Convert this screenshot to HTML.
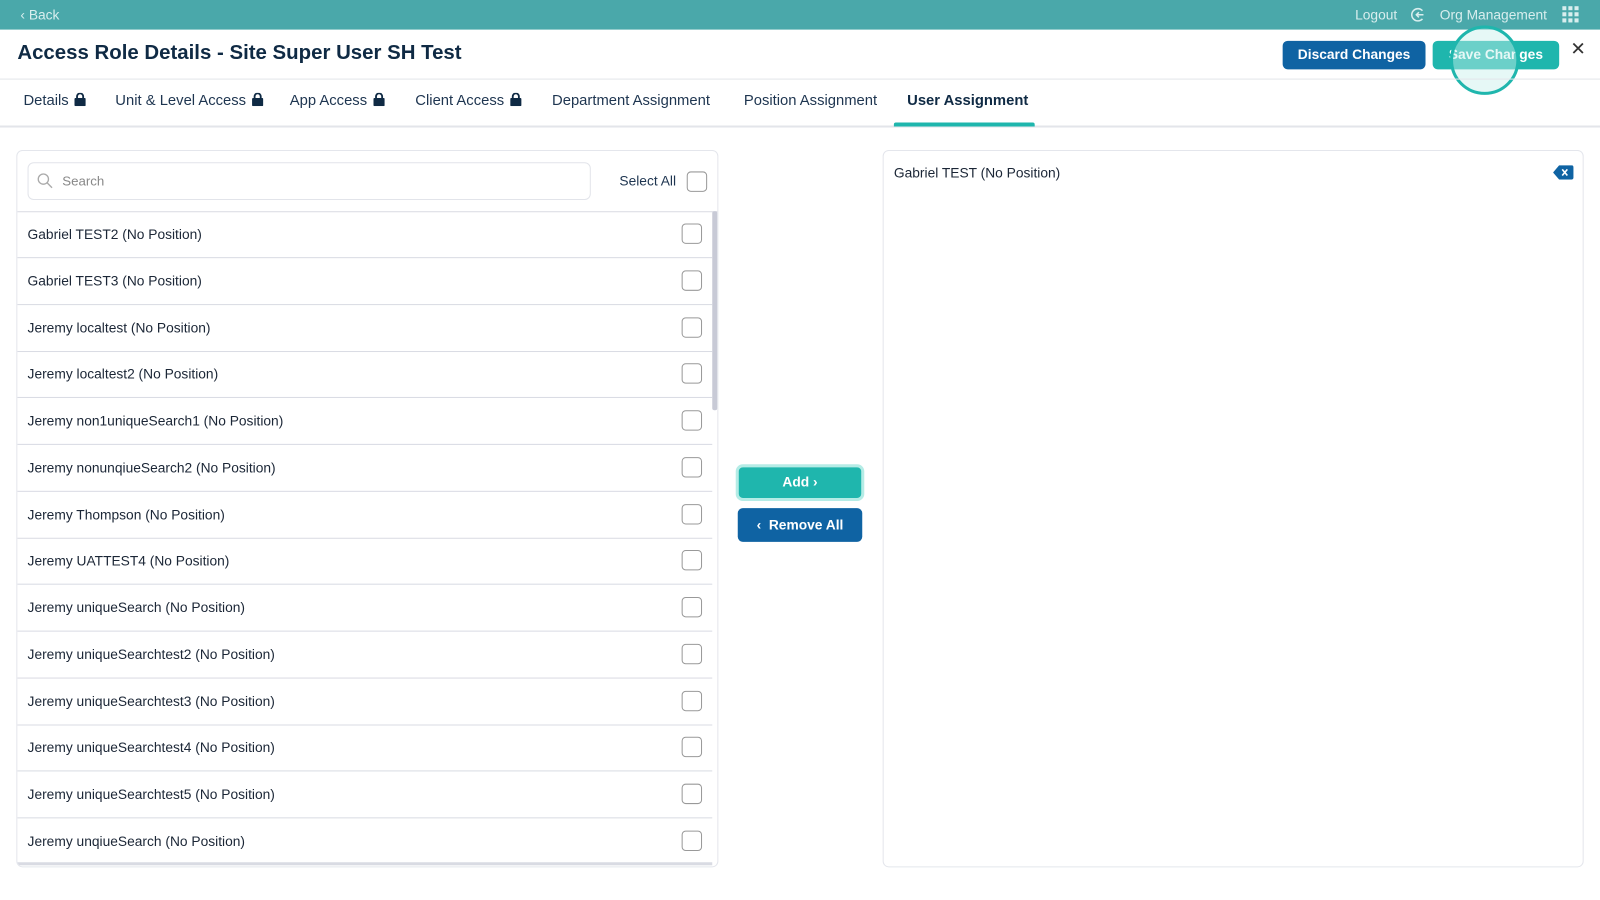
<!DOCTYPE html>
<html><head><style>
*{box-sizing:border-box;margin:0;padding:0}
body{width:1600px;height:900px;background:#fff;font-family:"Liberation Sans",sans-serif;color:#1b2636;position:relative;overflow:hidden}
#w{position:absolute;left:0;top:0;width:1568px;height:882px;transform:scale(1.020408);transform-origin:0 0}
.top{position:absolute;left:0;top:0;width:1568px;height:29px;background:#4aa8aa;color:#d8eeee;font-size:13.5px}
.abs{position:absolute}
.title{left:17px;top:41px;font-size:20px;font-weight:bold;color:#0f2a44}
.btn{position:absolute;border-radius:5px;color:#fff;font-weight:bold;font-size:13.5px;text-align:center}
.tabs{position:absolute;left:0;top:77px;width:1568px;height:48px;border-top:1px solid #e3e5ea;border-bottom:2px solid #e3e5ea}
.tab{position:absolute;top:13px;font-size:14.5px;color:#1e3550}
.lock{display:inline-block;vertical-align:-1px;margin-left:6px}
.panel{position:absolute;border:1px solid #e4e6ec;border-radius:6px;background:#fff}
.row{position:absolute;left:0;width:681px;height:46px;border-bottom:1px solid #d9dbe3;font-size:13.5px;padding:15px 0 0 10px}
.cb{position:absolute;right:10px;top:12px;width:20px;height:20px;border:1px solid #999;border-radius:4px}
</style></head><body><div id="w">
<div class="top">
<div class="abs" style="left:20px;top:7px">‹ Back</div>
<div class="abs" style="left:1328px;top:7px">Logout</div>
<svg class="abs" style="left:1382px;top:7px" width="15" height="15" viewBox="0 0 15 15"><path d="M12 3.5A6 6 0 1 0 12 11.5" fill="none" stroke="#d8eeee" stroke-width="1.5"/><path d="M13 7.5H6M8.5 5L6 7.5L8.5 10" fill="none" stroke="#d8eeee" stroke-width="1.5"/></svg>
<div class="abs" style="left:1411px;top:7px">Org Management</div>
<svg class="abs" style="left:1531px;top:6px" width="17" height="17"><g fill="#d8eeee"><rect x="0" y="0" width="4" height="4"/><rect x="6" y="0" width="4" height="4"/><rect x="12" y="0" width="4" height="4"/><rect x="0" y="6" width="4" height="4"/><rect x="6" y="6" width="4" height="4"/><rect x="12" y="6" width="4" height="4"/><rect x="0" y="12" width="4" height="4"/><rect x="6" y="12" width="4" height="4"/><rect x="12" y="12" width="4" height="4"/></g></svg>
</div>
<div class="abs title">Access Role Details - Site Super User SH Test</div>
<div class="btn" style="left:1257px;top:40px;width:140px;height:28px;line-height:28px;background:#0f63a3">Discard Changes</div>
<div class="btn" style="left:1404px;top:40px;width:124px;height:28px;line-height:28px;background:#1fb6ad">Save Changes</div>
<div class="abs" style="left:1421px;top:25px;width:68px;height:68px;border-radius:50%;border:3px solid #1fb6ad;background:rgba(200,240,236,.45)"></div>
<div class="abs" style="left:1539px;top:38px;font-size:18px;color:#333">✕</div>
<div class="tabs">
<div class="tab" style="left:23px">Details<svg class="lock" width="11" height="13"><rect x="0" y="5" width="11" height="8" rx="1" fill="#0f2a44"/><path d="M2.5 5V3.5a3 3 0 0 1 6 0V5" fill="none" stroke="#0f2a44" stroke-width="1.8"/></svg></div>
<div class="tab" style="left:113px">Unit &amp; Level Access<svg class="lock" width="11" height="13"><rect x="0" y="5" width="11" height="8" rx="1" fill="#0f2a44"/><path d="M2.5 5V3.5a3 3 0 0 1 6 0V5" fill="none" stroke="#0f2a44" stroke-width="1.8"/></svg></div>
<div class="tab" style="left:284px">App Access<svg class="lock" width="11" height="13"><rect x="0" y="5" width="11" height="8" rx="1" fill="#0f2a44"/><path d="M2.5 5V3.5a3 3 0 0 1 6 0V5" fill="none" stroke="#0f2a44" stroke-width="1.8"/></svg></div>
<div class="tab" style="left:407px">Client Access<svg class="lock" width="11" height="13"><rect x="0" y="5" width="11" height="8" rx="1" fill="#0f2a44"/><path d="M2.5 5V3.5a3 3 0 0 1 6 0V5" fill="none" stroke="#0f2a44" stroke-width="1.8"/></svg></div>
<div class="tab" style="left:541px">Department Assignment</div>
<div class="tab" style="left:729px">Position Assignment</div>
<div class="tab" style="left:889px;font-weight:bold;color:#0f2a44">User Assignment</div>
<div class="abs" style="left:876px;top:42px;width:138px;height:4px;background:#1fb6ad;border-radius:2px 2px 0 0"></div>
</div>
<div class="panel" style="left:16px;top:147px;width:688px;height:703px;overflow:hidden">
<div class="abs" style="left:10px;top:11px;width:552px;height:37px;border:1px solid #e2e4ea;border-radius:6px"></div>
<svg class="abs" style="left:19px;top:21px" width="16" height="16"><circle cx="6.5" cy="6.5" r="5" fill="none" stroke="#aaa" stroke-width="1.3"/><path d="M10 10L15 15" stroke="#aaa" stroke-width="1.3"/></svg>
<div class="abs" style="left:44px;top:22px;font-size:13px;color:#888">Search</div>
<div class="abs" style="left:590px;top:22px;font-size:13.5px;color:#1e3550">Select All</div>
<div class="abs" style="left:656px;top:20px;width:20px;height:20px;border:1px solid #999;border-radius:4px"></div>
<div class="abs" style="left:0;top:59px;width:688px;border-top:1px solid #d9dbe3"></div>
<div class="abs" style="left:681px;top:59px;width:5px;height:195px;background:#c8cad6;border-radius:2px"></div>
<div class="abs" style="left:0;top:59px">
<div class="row" style="top:0">Gabriel TEST2 (No Position)<div class="cb"></div></div>
<div class="row" style="top:46px">Gabriel TEST3 (No Position)<div class="cb"></div></div>
<div class="row" style="top:92px">Jeremy localtest (No Position)<div class="cb"></div></div>
<div class="row" style="top:137px">Jeremy localtest2 (No Position)<div class="cb"></div></div>
<div class="row" style="top:183px">Jeremy non1uniqueSearch1 (No Position)<div class="cb"></div></div>
<div class="row" style="top:229px">Jeremy nonunqiueSearch2 (No Position)<div class="cb"></div></div>
<div class="row" style="top:275px">Jeremy Thompson (No Position)<div class="cb"></div></div>
<div class="row" style="top:320px">Jeremy UATTEST4 (No Position)<div class="cb"></div></div>
<div class="row" style="top:366px">Jeremy uniqueSearch (No Position)<div class="cb"></div></div>
<div class="row" style="top:412px">Jeremy uniqueSearchtest2 (No Position)<div class="cb"></div></div>
<div class="row" style="top:458px">Jeremy uniqueSearchtest3 (No Position)<div class="cb"></div></div>
<div class="row" style="top:503px">Jeremy uniqueSearchtest4 (No Position)<div class="cb"></div></div>
<div class="row" style="top:549px">Jeremy uniqueSearchtest5 (No Position)<div class="cb"></div></div>
<div class="row" style="top:595px;border-bottom:3px solid #d9dbe3">Jeremy unqiueSearch (No Position)<div class="cb"></div></div>
</div>
</div>
<div class="btn" style="left:721px;top:455px;width:126px;height:36px;line-height:30px;background:#1fb6ad;border:3px solid #b5ece6;border-radius:7px">Add ›</div>
<div class="btn" style="left:723px;top:498px;width:122px;height:33px;line-height:33px;background:#0f63a3">‹&nbsp;&nbsp;Remove All</div>
<div class="panel" style="left:865px;top:147px;width:687px;height:703px">
<div class="abs" style="left:10px;top:14px;font-size:13.5px">Gabriel TEST (No Position)</div>
<svg class="abs" style="left:656px;top:14px" width="20" height="14"><path d="M6 0H18a2 2 0 0 1 2 2V12a2 2 0 0 1-2 2H6L0 7Z" fill="#0f63a3"/><path d="M9 4L14 10M14 4L9 10" stroke="#fff" stroke-width="1.6"/></svg>
</div>
</div></body></html>
